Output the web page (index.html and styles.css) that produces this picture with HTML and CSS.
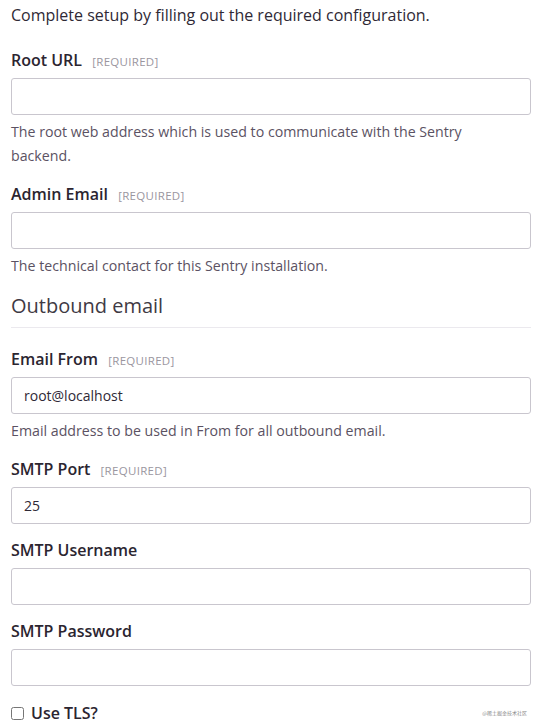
FILE: index.html
```html
<!DOCTYPE html>
<html lang="en">
<head>
  <meta charset="UTF-8">
  <title>Sentry Setup</title>
  <link rel="stylesheet" href="styles.css">
</head>
<body>
  <div class="setup">
    <p class="intro">Complete setup by filling out the required configuration.</p>

    <div class="field">
      <label class="field-label">Root URL <span class="req">[Required]</span></label>
      <input class="field-input" type="text">
      <p class="help">The root web address which is used to communicate with the Sentry backend.</p>
    </div>

    <div class="field">
      <label class="field-label">Admin Email <span class="req">[Required]</span></label>
      <input class="field-input" type="text">
      <p class="help">The technical contact for this Sentry installation.</p>
    </div>

    <h3 class="section-title">Outbound email</h3>

    <div class="field">
      <label class="field-label">Email From <span class="req">[Required]</span></label>
      <input class="field-input" type="text" value="root@localhost">
      <p class="help">Email address to be used in From for all outbound email.</p>
    </div>

    <div class="field">
      <label class="field-label">SMTP Port <span class="req">[Required]</span></label>
      <input class="field-input" type="text" value="25">
    </div>

    <div class="field">
      <label class="field-label">SMTP Username</label>
      <input class="field-input" type="text">
    </div>

    <div class="field">
      <label class="field-label">SMTP Password</label>
      <input class="field-input" type="password">
    </div>

    <label class="check"><input type="checkbox"> Use TLS?</label>
  </div>
  <div class="watermark">@稀土掘金技术社区</div>
</body>
</html>
```

FILE: styles.css
```css
body { margin: 0; font-family: "Open Sans", "Noto Sans", sans-serif; color: #2f2936; background: #fff; }
.setup { padding: 0 11px; }
.intro { margin: 0 0 24px; padding-top: 4px; font-size: 16px; line-height: 22px; color: #2f2936; }
.field { margin-top: 16px; }
.intro + .field { margin-top: 0; }
.field-label { display: block; font-size: 16px; font-weight: 600; line-height: 20px; height: 20px; margin-bottom: 8px; color: #2b2530; }
.req { font-size: 11.5px; font-weight: 400; line-height: 1; color: #9a96a0; text-transform: uppercase; margin-left: 6px; letter-spacing: 0.3px; }
.field-input { display: block; box-sizing: border-box; width: 100%; height: 37px; border: 1px solid #c9c6ce; border-radius: 3px; padding: 0 12px; font-family: inherit; font-size: 14px; color: #2f2936; background: #fff; }
.help { max-width: 480px; margin: 5px 0 0; font-size: 14.2px; line-height: 24px; color: #5b5263; }
.section-title { margin: 14px 0 0; padding-bottom: 7px; font-size: 20px; font-weight: 400; line-height: 28px; color: #3f3a44; border-bottom: 1px solid #ebe9ee; }
.section-title + .field { margin-top: 21px; }
.check { display: flex; align-items: center; gap: 7px; margin-top: 17px; font-size: 16px; font-weight: 600; line-height: 20px; color: #2b2530; }
.check input { margin: 0; width: 13px; height: 13px; }
.watermark { position: absolute; right: 15px; top: 709px; font-size: 5px; color: #888; font-family: "Noto Sans CJK SC", sans-serif; }
```
